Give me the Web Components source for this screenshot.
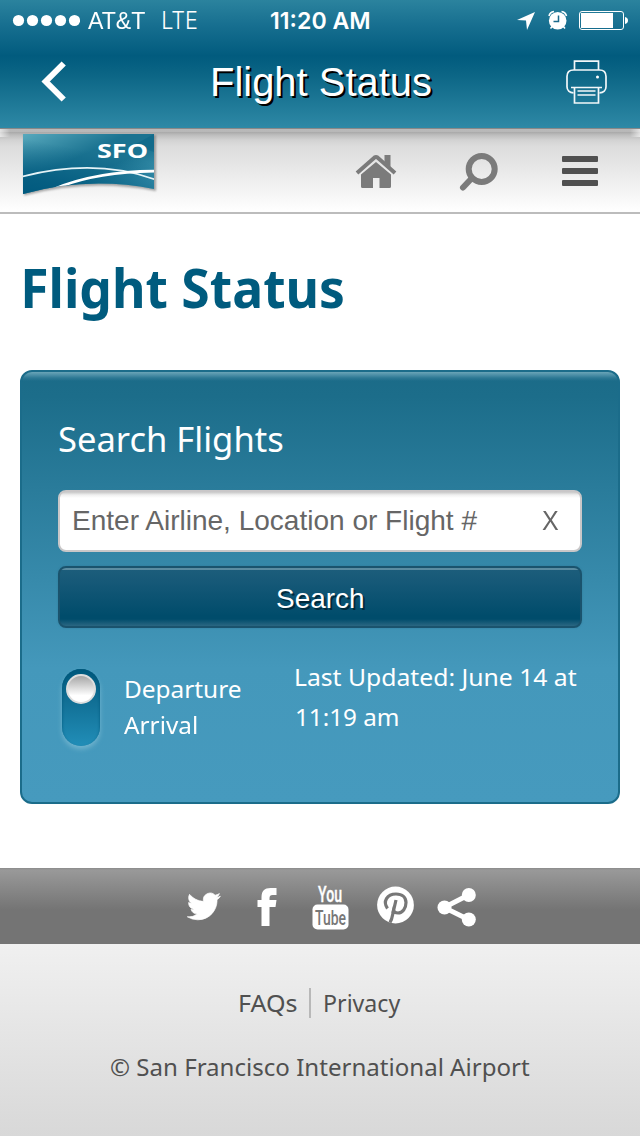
<!DOCTYPE html>
<html lang="en">
<head>
<meta charset="utf-8">
<title>Flight Status</title>
<style>
body{margin:0;background:#fff;width:640px;height:1136px;overflow:hidden;font-family:"Noto Sans",sans-serif}
</style>
</head>
<body>
<sfo-app></sfo-app>

<template id="t-fit-text">
<style>
:host{display:block;white-space:nowrap;flex:none}
span{display:inline-block;transform-origin:0 50%;vertical-align:top}
</style><span><slot></slot></span>
</template>

<template id="t-status-bar">
<style>
:host{display:flex;height:41px;align-items:center;color:#fff;font:23.5px/42px Inter,sans-serif}
svg{display:block;flex:none}
.dots{margin-left:12px}
.carrier{margin-left:8px;font-weight:400;font-family:"Liberation Sans",sans-serif}
.net{margin-left:18px;font-weight:300}
.time{margin-left:74px;font-weight:600}
.sys{margin-left:148px}
</style>
<svg class="dots" width="68" height="41" fill="#fff"><circle cx="6.5" cy="20.5" r="5.6"/><circle cx="20.5" cy="20.5" r="5.6"/><circle cx="34.5" cy="20.5" r="5.6"/><circle cx="48.5" cy="20.5" r="5.6"/><circle cx="62.5" cy="20.5" r="5.6"/></svg>
<fit-text class="carrier" w="57">AT&amp;T</fit-text>
<fit-text class="net" w="34">LTE</fit-text>
<fit-text class="time" w="98">11:20 AM</fit-text>
<svg class="sys" width="114" height="41" fill="#fff">
<path d="M0 20 18 12 10 30 9 20.5Z"/>
<circle cx="40.700" cy="20.800" r="8.800"/><path d="M32 16a6 6 0 0 1 5-4.500M49.500 16a6 6 0 0 0-5-4.500" fill="none" stroke="#fff" stroke-width="1.600"/><path d="m35.500 26-2 2.500M46 26l2 2.500" stroke="#fff" stroke-width="1.500"/><path d="M41.500 15.500v6h-5" fill="none" stroke="#1a6a8c" stroke-width="1.500"/>
<rect x="62.500" y="11.500" width="44" height="18" rx="2.500" fill="none" stroke="#fff"/><rect x="64" y="13" width="32" height="15"/><path d="M108 17c4 .5 4 6.500 0 7z"/>
</svg>
</template>

<template id="t-title-bar">
<style>
:host{display:flex;height:82px;align-items:center;color:#fff;font:40px/83px "Liberation Sans",Arial,sans-serif;text-shadow:2px 2px 0 #000}
svg{display:block;flex:none}
.back{margin-left:38px}
fit-text{margin-left:141px}
.print{margin-left:134px}
</style>
<svg class="back" width="34" height="82" fill="none" stroke="#fff" stroke-width="6"><path d="M25.700 22.500 7.700 40.500l18 18"/></svg>
<fit-text w="218">Flight Status</fit-text>
<svg class="print" width="46" height="82" fill="none" stroke="#f2f7f9" stroke-width="1.700"><path d="M9.500 29v-8.800h24V29M8.500 51.800c-4 0-6.500-2.500-6.500-6V35.500C2 31.500 4.500 29 8.500 29h26c4 0 6.500 2.500 6.500 6.500v10.300c0 3.500-2.500 6-6.500 6"/><path d="M6 46.500h31M9.500 47v15h24V47M12.500 50h18M12.500 54h18"/><circle cx="32.500" cy="36" r="1.500" fill="#fff" stroke="none"/></svg>
</template>

<template id="t-app-header">
<style>
:host{display:block;height:128px;background:linear-gradient(#2b839e 0,#176f90 25px,#015b7e 56px,#0b6585 74px,#2e89a6 128px)}
</style>
<status-bar></status-bar><title-bar></title-bar>
</template>

<template id="t-site-masthead">
<style>
:host{display:flex;height:84px;border-bottom:2px solid #bcbcbc;background:linear-gradient(90deg,#fff9 0,#fff0 10px,#fff0 630px,#fff9) 0 1px/100% 8px no-repeat,linear-gradient(#777 0,#999 1px,#b9b9b9 1.500px,#b8b8b8 3.500px,#a8a8a8 4px,#bdbdbd 7px,#d2d2d2 12px,#dcdcdc 18px,#fefefe 82px)}
svg{display:block;flex:none}
.home{margin-left:193px}.find{margin-left:60px}.menu{margin-left:61px}
</style>
<svg width="162" height="74" viewBox="0 128 162 74">
<defs><linearGradient id="g" x1="0" y1="0" x2="1" y2="1"><stop offset="0" stop-color="#58a9bd"/><stop offset=".4" stop-color="#1b7391"/><stop offset=".6" stop-color="#1b7391"/><stop offset="1" stop-color="#52aac3"/></linearGradient>
<linearGradient id="h" x1="0" y1="1" x2=".4" y2="0"><stop offset="0" stop-color="#00597e"/><stop offset=".25" stop-color="#00597e" stop-opacity=".8"/><stop offset=".8" stop-color="#00597e" stop-opacity="0"/></linearGradient>
<clipPath id="c"><path d="M23 134H154V189Q88 176 23 194Z"/></clipPath></defs>
<path d="M24 135H156V191Q90 178 24 195.500Z" fill="#777" opacity=".65" style="filter:blur(1px)"/>
<g clip-path="url(#c)"><rect x="23" y="134" width="131" height="61" fill="url(#g)"/><rect x="23" y="134" width="131" height="61" fill="url(#h)"/>
<path d="M134 145Q145 139 154 134V152Z" fill="#00597e" opacity=".3"/>
<path d="M22 176.500Q96 158 155 179.500" fill="none" stroke="#e5f3f7" stroke-width="1.700"/><path d="M53 188Q96 170 155 169.800V172.500Q99 173 60 188Z" fill="#fff"/></g>
<text x="97" y="158" fill="#fff" font-family="Noto Sans,sans-serif" font-weight="700" font-size="20" textLength="51" lengthAdjust="spacingAndGlyphs">SFO</text>
</svg>
<svg class="home" width="42" height="84" viewBox="355 128 42 84" fill="#7b7b7b"><path d="M376 162 391 174.500v12q0 1.500-1.500 1.500H379.500v-10h-6.500v10h-10.500q-1.500 0-1.500-1.500v-12Z"/><path d="M357 173 374.500 157.500q1.500-1 3 0L395 173" fill="none" stroke="#7b7b7b" stroke-width="4"/><path d="M384.500 155h6v12l-6-5Z"/></svg>
<svg class="find" width="44" height="84" viewBox="457 128 44 84" fill="none" stroke="#7b7b7b"><circle cx="481.700" cy="169" r="13" stroke-width="6"/><path d="m472 178-9 9.500" stroke-width="6" stroke-linecap="round"/></svg>
<svg class="menu" width="36" height="84" viewBox="562 128 36 84" fill="#505050"><rect x="562" y="156" width="36" height="6" rx="1"/><rect x="562" y="168" width="36" height="6" rx="1"/><rect x="562" y="180" width="36" height="6" rx="1"/></svg>
</template>

<template id="t-search-field">
<style>
:host{display:flex;box-sizing:border-box;height:62px;border:2px solid #c9c7c8;border-radius:8px;background:linear-gradient(#c8c8c8,#f0f0f0 3px,#fff 6px);font:28px/58px "Liberation Sans",Arial,sans-serif;color:#666;padding-left:14px}
.x{margin-left:63px}
</style>
<fit-text w="405"><slot></slot></fit-text><fit-text class="x" w="17">X</fit-text>
</template>

<template id="t-search-button">
<style>
:host{display:flex;justify-content:center;box-sizing:border-box;height:62px;border:2px solid #1a536d;border-radius:8px;background:linear-gradient(#5b8ca1 0,#5b8ca1 1.500px,#1c5d7b 2px,#155877 15px,#004c6b 48px,#004c6b 51px,#2b6782 58px);font:28px/62px "Liberation Sans",Arial,sans-serif;color:#fff;text-shadow:2px 2px 0 #012a3c;box-shadow:0 0 2px #1a536d44}
</style>
<fit-text w="86">Search</fit-text>
</template>

<template id="t-flight-toggle">
<style>
:host{display:block;box-sizing:border-box;width:38px;height:77px;border-radius:19px;padding:5px 0 0 4px;background:linear-gradient(#00597d,#127197 35px,#218eb8);box-shadow:0 3px 5px #72b5cf,inset 0 2px 3px #00597d}
i{display:block;width:30px;height:30px;border-radius:50%;box-sizing:border-box;border:2.500px solid #dedede;background:linear-gradient(#a6a6a6,#fff 75%)}
</style><i></i>
</template>

<template id="t-search-card">
<style>
:host{display:block;box-sizing:border-box;margin:47px 20px 0;height:434px;padding:42px 36px 0;border:2px solid #1b6c8a;border-radius:12px;background:linear-gradient(#69a4b7 0,#4c8fa7 3px,#2c7894 6px,transparent 9px),linear-gradient(#1b6b88 0,#1c6d8a 24px,#4498bb 296px,#469abe);color:#fff}
h2{margin:0 0 27px 1px;font:35px/49px "Noto Sans",sans-serif}
search-button{margin-top:14px}
.row{display:flex;margin-top:29px;padding-left:4px;font-size:24px}
flight-toggle{margin-top:12px}
.modes{margin:14px 0 0 24px;line-height:36px;width:117px}
.upd{margin-left:55px;line-height:40px}
.upd .t{margin-left:1px}
</style>
<h2><fit-text w="224">Search Flights</fit-text></h2>
<search-field>Enter Airline, Location or Flight #</search-field>
<search-button></search-button>
<div class="row"><flight-toggle></flight-toggle>
<div class="modes"><fit-text w="115" style="margin-left:2px">Departure</fit-text><fit-text w="73">Arrival</fit-text></div>
<div class="upd"><fit-text w="281">Last Updated: June 14 at</fit-text><fit-text class="t" w="101">11:19 am</fit-text></div></div>
</template>

<template id="t-social-bar">
<style>
:host{display:flex;margin-top:64px;height:76px;background:linear-gradient(#8b8b8b 0,#999 2px,#747474 42px,#747474)}
svg{display:block}
</style>
<svg width="640" height="76" viewBox="0 868 640 76" fill="#fff">
<path transform="translate(187.300 890) scale(1.380 1.370)" stroke="#fff" stroke-width=".5" d="M23.950 4.570a10 10 0 0 1-2.820.770 4.960 4.960 0 0 0 2.160-2.720c-.950.550-2 .950-3.130 1.180a4.920 4.920 0 0 0-8.380 4.480C7.690 8.090 4.070 6.130 1.640 3.160a4.820 4.820 0 0 0-.670 2.480c0 1.710.870 3.210 2.190 4.100a4.900 4.900 0 0 1-2.230-.620v.060a4.920 4.920 0 0 0 3.950 4.830 5 5 0 0 1-2.210.080 4.940 4.940 0 0 0 4.600 3.420A9.870 9.870 0 0 1 0 19.540a14 14 0 0 0 7.550 2.210c9.050 0 14-7.500 14-13.980 0-.210 0-.420-.020-.630a9.940 9.940 0 0 0 2.460-2.550z"/>
<path d="M261.500 926V907h-4v-7h4v-3c0-6 3-9 9-9h6v7h-4q-3 0-3 3v2h7l-1 7h-6v19Z"/>
<text x="318" y="902" font-family="Roboto,sans-serif" font-weight="500" stroke="#fff" stroke-width=".4" font-size="22.500" textLength="24" lengthAdjust="spacingAndGlyphs">You</text>
<rect x="312.500" y="904.500" width="36" height="25" rx="5"/>
<text x="315" y="924.500" fill="#777" font-family="Roboto,sans-serif" font-weight="500" font-size="20" textLength="31" lengthAdjust="spacingAndGlyphs">Tube</text>
<circle cx="395.500" cy="905" r="18.400"/><path d="M387.500 908.500c-5-7-.5-14.500 8.500-14.500 6.500 0 10 3.500 10 8.500 0 6-3.500 10.500-8 10.500-2.500 0-4-1-4.500-2.500-1 4-1 8-3.500 12" fill="none" stroke="#777" stroke-width="3.200"/><path d="m393 913 3-13" stroke="#777" stroke-width="3.200"/>
<path d="M468.500 895 444 907.500l24.500 12" fill="none" stroke="#fff" stroke-width="4.800"/><circle cx="468.800" cy="895" r="7"/><circle cx="444.500" cy="907.500" r="7"/><circle cx="468.800" cy="919.500" r="7"/>
</svg>
</template>

<template id="t-site-footer">
<style>
:host{display:block;box-sizing:border-box;height:192px;padding-top:44px;background:linear-gradient(#f0f0f0,#d8d8d8);color:#505050;font-size:24px;line-height:30px}
nav{display:flex;padding-left:240px}
i{width:2px;height:30px;background:#b8b8b8;margin:0 14px 0 12px}
.c{margin:34px 0 0 111px}
</style>
<nav><fit-text w="57">FAQs</fit-text><i></i><fit-text w="76">Privacy</fit-text></nav>
<fit-text class="c" w="419">© San Francisco International Airport</fit-text>
</template>

<template id="t-sfo-app">
<style>
:host{display:block;width:640px;height:1136px}
h1{margin:37px 0 0 24px;font:700 54px/72px "Noto Sans",sans-serif;color:#005b7e}
</style>
<app-header></app-header><site-masthead></site-masthead>
<h1><fit-text w="319">Flight Status</fit-text></h1>
<search-card></search-card><social-bar></social-bar><site-footer></site-footer>
</template>

<script>
class View extends HTMLElement {
  connectedCallback() {
    if (this.shadowRoot) return;
    this.attachShadow({mode: 'open'}).appendChild(
      document.getElementById('t-' + this.localName).content.cloneNode(true));
    this.ready();
  }
  ready() {}
}
const pen = document.createElement('canvas').getContext('2d');
// Sets a line of text to an exact ink width, given in pixels by the w attribute.
class FitText extends View {
  ready() {
    const slot = this.querySelector('slot');
    const nodes = slot ? slot.assignedNodes({flatten: true}) : [this];
    const text = nodes.map(n => n.textContent).join('').trim();
    const cs = getComputedStyle(this);
    pen.font = cs.fontWeight + ' ' + cs.fontSize + ' ' + cs.fontFamily;
    const m = pen.measureText(text);
    const left = -m.actualBoundingBoxLeft;
    const w = parseFloat(this.getAttribute('w'));
    const k = w / (m.actualBoundingBoxRight + m.actualBoundingBoxLeft);
    this.style.width = w + 'px';
    this.shadowRoot.querySelector('span').style.transform =
      'translateX(' + (left * -k) + 'px) scaleX(' + k + ')';
  }
}
customElements.define('fit-text', FitText);
['status-bar', 'title-bar', 'app-header', 'site-masthead', 'search-field', 'search-button',
 'flight-toggle', 'search-card', 'social-bar', 'site-footer', 'sfo-app']
  .forEach(n => customElements.define(n, class extends View {}));
</script>
</body>
</html>
